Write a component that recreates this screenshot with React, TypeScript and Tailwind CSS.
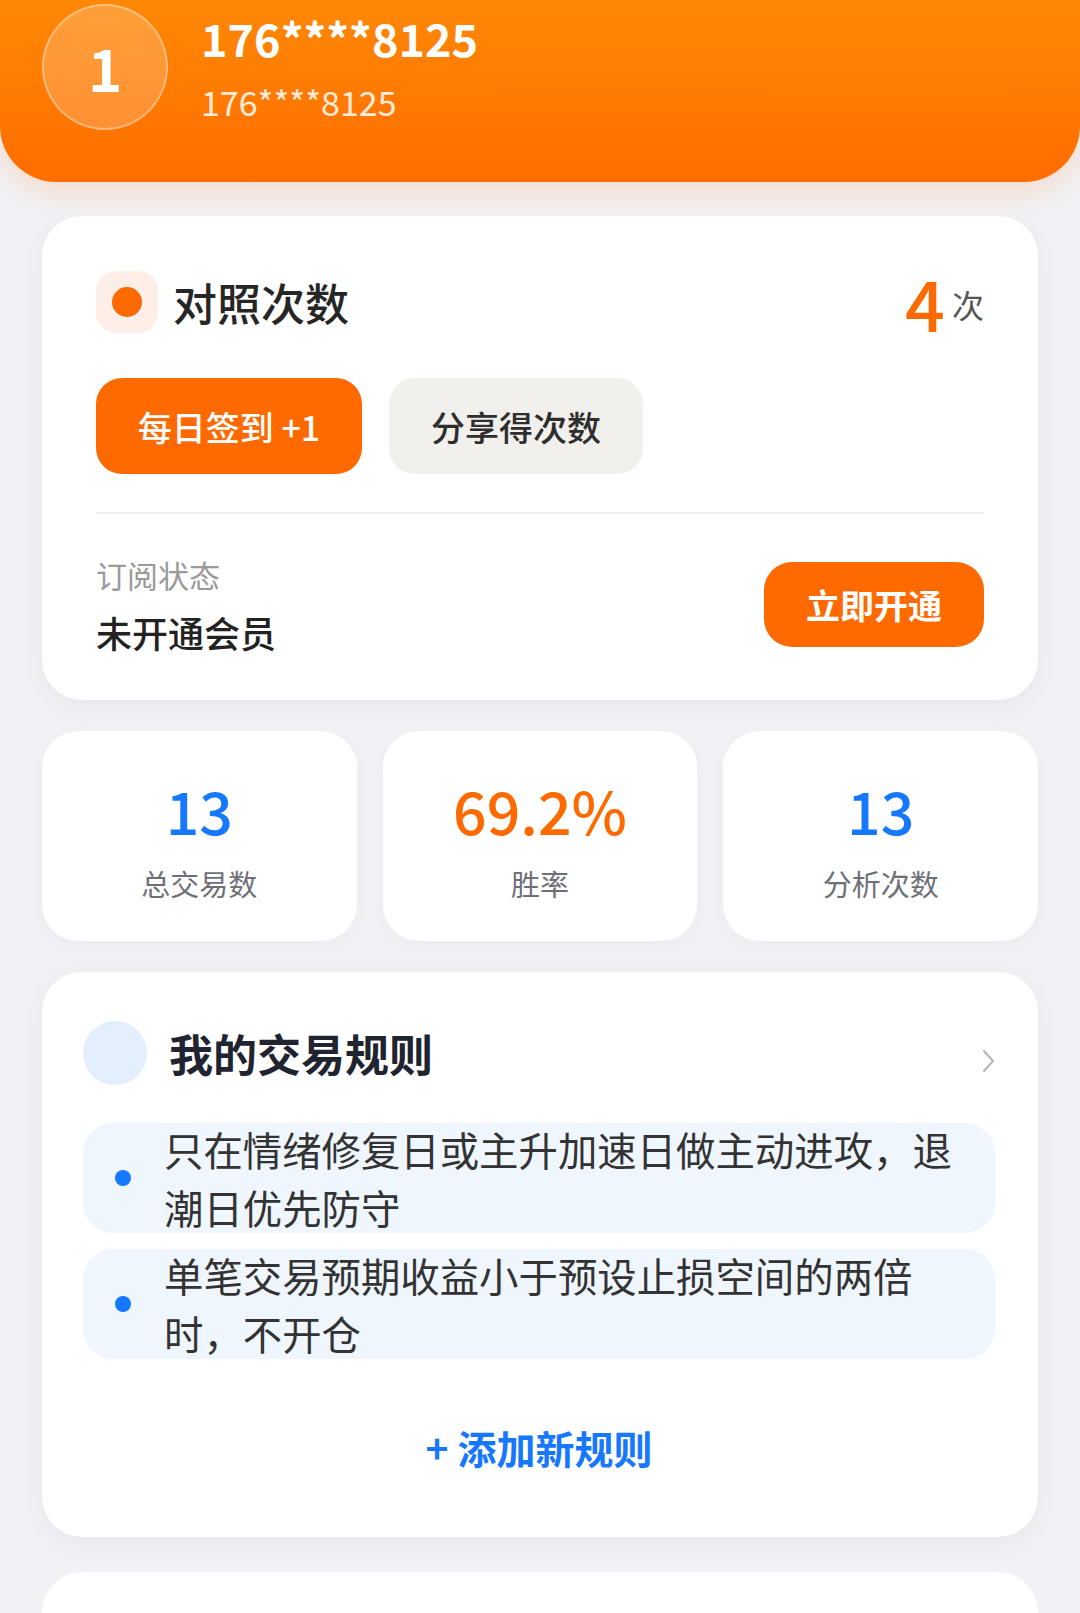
const rules = [
  '只在情绪修复日或主升加速日做主动进攻，退潮日优先防守',
  '单笔交易预期收益小于预设止损空间的两倍时，不开仓',
]

const stats = [
  { value: '13', label: '总交易数', color: 'text-[#1677ff]' },
  { value: '69.2%', label: '胜率', color: 'text-[#ff6a00]' },
  { value: '13', label: '分析次数', color: 'text-[#1677ff]' },
]

export default function App() {
  return (
    <div className="min-h-screen bg-[#f2f2f6] font-['Noto_Sans_CJK_SC',sans-serif] text-[#222]">
      {/* ---------- header ---------- */}
      <header className="flex h-[182px] items-start rounded-b-[56px] bg-gradient-to-b from-[#ff8806] to-[#ff6d00] pt-[4px] pl-[42px] shadow-[0_10px_30px_rgba(255,110,0,0.18)]">
        <div className="flex h-[126px] w-[126px] items-center justify-center rounded-full border-2 border-white/35 bg-white/20 text-[58px] font-bold text-white">
          1
        </div>
        <div className="ml-[33px] flex flex-col text-white">
          <span className="mt-[6px] text-[45px] leading-[56px] font-bold">176****8125</span>
          <span className="mt-[16px] text-[34px] leading-[40px] text-white/85">176****8125</span>
        </div>
      </header>

      <main className="flex flex-col gap-[31px] px-[42px] pt-[34px]">
        {/* ---------- quota card ---------- */}
        <section className="rounded-[40px] bg-white px-[54px] pt-[55px] pb-[53px] shadow-[0_6px_24px_rgba(0,0,0,0.05)]">
          <div className="flex h-[62px] items-center justify-between">
            <div className="flex items-center gap-[15px]">
              <div className="flex h-[62px] w-[62px] items-center justify-center rounded-[20px] bg-[#fdefe8]">
                <div className="h-[30px] w-[30px] rounded-full bg-[#ff6a00]" />
              </div>
              <span className="text-[44px] leading-none font-medium text-[#262626]">对照次数</span>
            </div>
            <div className="flex items-center">
              <span className="text-[70px] leading-none font-medium text-[#ff6a00]">4</span>
              <span className="mt-[4px] ml-[7px] text-[32px] leading-none text-[#555]">次</span>
            </div>
          </div>

          <div className="mt-[45px] flex gap-[27px]">
            <button className="h-[96px] w-[266px] rounded-[26px] bg-[#ff6a00] text-[34px] font-medium text-white">
              每日签到 +1
            </button>
            <button className="h-[96px] w-[254px] rounded-[26px] bg-[#f1f0ec] text-[34px] font-medium text-[#2e2e2e]">
              分享得次数
            </button>
          </div>

          <div className="mt-[38px] h-[2px] bg-[#f1efeb]" />

          <div className="mt-[48px] flex h-[85px] items-center justify-between">
            <div className="flex flex-col">
              <span className="text-[31px] leading-[40px] text-[#9a9a9a]">订阅状态</span>
              <span className="mt-[14px] text-[36px] leading-[46px] font-medium text-[#222]">未开通会员</span>
            </div>
            <button className="h-[85px] w-[220px] rounded-[28px] bg-[#ff6a00] text-[34px] font-semibold text-white">
              立即开通
            </button>
          </div>
        </section>

        {/* ---------- stats ---------- */}
        <div className="grid grid-cols-3 gap-[26px]">
          {stats.map(s => (
            <div
              key={s.label}
              className="flex h-[210px] flex-col items-center justify-center rounded-[36px] bg-white shadow-[0_4px_16px_rgba(0,0,0,0.03)]"
            >
              <span className={`mt-[6px] text-[59px] leading-[66px] font-medium ${s.color}`}>{s.value}</span>
              <span className="mt-[22px] text-[29px] leading-[36px] text-[#6f6f78]">{s.label}</span>
            </div>
          ))}
        </div>

        {/* ---------- trading rules ---------- */}
        <section className="rounded-[40px] bg-white pt-[49px] pr-[43px] pb-[61px] pl-[41px] shadow-[0_6px_24px_rgba(0,0,0,0.05)]">
          <div className="flex h-[64px] items-center">
            <div className="h-[64px] w-[64px] rounded-full bg-[#e4effd]" />
            <span className="ml-[22px] text-[44px] leading-none font-semibold text-[#1f2430]">我的交易规则</span>
            <svg className="mt-[16px] ml-auto h-[24px] w-[13px]" viewBox="0 0 13 24" fill="none">
              <path d="M2 2l9 10-9 10" stroke="#b5b5ba" strokeWidth="2" strokeLinecap="round" strokeLinejoin="round" />
            </svg>
          </div>

          <div className="mt-[38px] flex flex-col gap-[16px]">
            {rules.map(r => (
              <div key={r} className="flex h-[110px] items-center rounded-[30px] bg-[#f0f6fe] pr-[26px] pl-[32px]">
                <div className="h-[16px] w-[16px] shrink-0 rounded-full bg-[#1677ff]" />
                <p className="ml-[33px] text-[39.4px] leading-[58px] text-[#333]">{r}</p>
              </div>
            ))}
          </div>

          <button className="mt-[59px] block h-[58px] w-full text-center text-[39px] leading-[58px] font-bold text-[#1677ff]">
            + 添加新规则
          </button>
        </section>

        <section className="mt-[4px] h-[200px] rounded-t-[40px] bg-white" />
      </main>
    </div>
  )
}
